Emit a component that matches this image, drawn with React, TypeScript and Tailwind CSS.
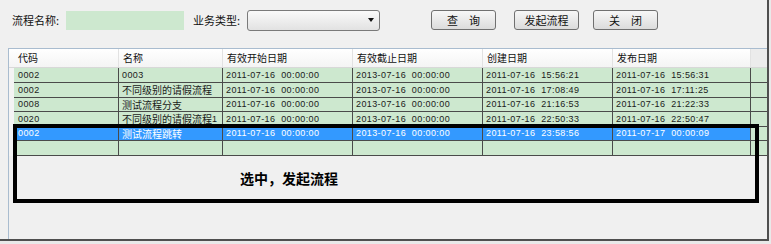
import React from "react";

const cols = [
  { w: 110, title: "代码" },
  { w: 104, title: "名称" },
  { w: 130, title: "有效开始日期" },
  { w: 130, title: "有效截止日期" },
  { w: 130, title: "创建日期" },
  { w: 138, title: "发布日期" },
];

const rows: { cells: string[]; h: number; sel?: boolean }[] = [
  { cells: ["0002", "0003", "2011-07-16  00:00:00", "2013-07-16  00:00:00", "2011-07-16  15:56:21", "2011-07-16  15:56:31"], h: 15 },
  { cells: ["0002", "不同级别的请假流程", "2011-07-16  00:00:00", "2013-07-16  00:00:00", "2011-07-16  17:08:49", "2011-07-16  17:11:25"], h: 15 },
  { cells: ["0008", "测试流程分支", "2011-07-16  00:00:00", "2013-07-16  00:00:00", "2011-07-16  21:16:53", "2011-07-16  21:22:33"], h: 14 },
  { cells: ["0020", "不同级别的请假流程1", "2011-07-16  00:00:00", "2013-07-16  00:00:00", "2011-07-16  22:50:33", "2011-07-16  22:50:47"], h: 15 },
  { cells: ["0002", "测试流程跳转", "2011-07-16  00:00:00", "2013-07-16  00:00:00", "2011-07-16  23:58:56", "2011-07-17  00:00:09"], h: 14, sel: true },
  { cells: ["", "", "", "", "", ""], h: 15 },
];

function Txt({ s }: { s: string }) {
  const parts = s.split(/([\u4e00-\u9fff]+)/);
  return (
    <>
      {parts.map((p, i) =>
        /[\u4e00-\u9fff]/.test(p) ? (
          <span key={i} className="text-[10px] tracking-normal font-['Noto_Sans_CJK_SC',sans-serif]">
            {p}
          </span>
        ) : (
          <span key={i}>{p}</span>
        )
      )}
    </>
  );
}

function Btn({ label }: { label: string }) {
  return (
    <div className="w-[65px] h-[20px] rounded-[3px] border border-[#707070] bg-gradient-to-b from-[#f7f7f7] to-[#dcdcdc] flex items-center justify-center text-[11px] leading-none text-[#111] whitespace-pre">
      {label}
    </div>
  );
}

export default function App() {
  return (
    <div className="w-[771px] h-[244px] bg-[#e9e9e9] relative overflow-hidden font-['Noto_Sans_CJK_SC',sans-serif]">
      <div className="w-[769px] h-[241px] bg-[#f0f0f0] border-r-2 border-b-2 border-[#4f4f4f] flex flex-col">
        {/* toolbar */}
        <div className="h-[48px] pt-[10px] pl-[12px]">
          <div className="flex items-center h-[20px]">
            <div className="w-[54px] text-[11px] leading-none text-[#111]">流程名称:</div>
            <div className="w-[118px] h-[19px] bg-[#cde8cf]" />
            <div className="ml-[9px] w-[54px] text-[11px] leading-none text-[#111]">业务类型:</div>
            <div className="w-[133px] h-[21px] rounded-[3px] border border-[#7a7a7a] bg-gradient-to-b from-[#fafafa] to-[#e2e2e2] flex items-center justify-end pr-[5px]">
              <svg width="6" height="4" viewBox="0 0 6 4">
                <path d="M0 0 H6 L3 4 Z" fill="#111" />
              </svg>
            </div>
            <div className="ml-[51px]">
              <Btn label={"查　询"} />
            </div>
            <div className="ml-[18px]">
              <Btn label="发起流程" />
            </div>
            <div className="ml-[14px]">
              <Btn label={"关　闭"} />
            </div>
          </div>
        </div>
        {/* grid panel */}
        <div className="ml-[8px] flex-1 border-l border-t border-[#a9bccf] bg-[#f0f0f0] overflow-hidden flex flex-col">
          {/* header */}
          <div className="flex h-[19px] border-b border-[#d8d8d8] shrink-0">
            {cols.map((c, i) => (
              <div
                key={i}
                style={{ width: c.w }}
                className={`shrink-0 h-full bg-gradient-to-b from-[#ffffff] to-[#f4f4f4] border-r border-[#e2e2e2] flex items-center text-[10px] leading-none text-[#111] ${i === 0 ? "pl-[9px]" : "pl-[4px]"}`}
              >
                {c.title}
              </div>
            ))}
            <div className="flex-1 h-full bg-[#ececec]" />
          </div>
          {/* rows */}
          {rows.map((r, ri) => (
            <div key={ri} style={{ height: r.h }} className="flex shrink-0">
              <div className="w-[5px] shrink-0 h-full bg-[#f4f4f4]" />
              {r.cells.map((c, ci) => (
                <div
                  key={ci}
                  style={{ width: ci === 0 ? cols[0].w - 5 : cols[ci].w }}
                  className={`shrink-0 h-full border-r border-b border-[#4a4a4a] flex items-center whitespace-pre overflow-hidden font-['Liberation_Sans','Noto_Sans_CJK_SC',sans-serif] text-[9px] tracking-[0.4px] leading-none ${
                    r.sel ? "bg-[#3399ff] text-white" : "bg-[#cde8cf] text-[#1a1a1a]"
                  } ${ci === 0 ? "pl-[4px]" : "pl-[3px]"}`}
                >
                  <Txt s={c} />
                </div>
              ))}
              <div className="flex-1 h-full bg-[#cde8cf] border-b border-[#4a4a4a]" />
            </div>
          ))}
        </div>
      </div>
      {/* annotation */}
      <div className="absolute left-[13px] top-[124px] w-[746px] h-[79px] border-4 border-black pointer-events-none" />
      <div className="absolute left-[240px] top-[171px] text-[14px] font-bold leading-none text-black">选中，发起流程</div>
    </div>
  );
}
